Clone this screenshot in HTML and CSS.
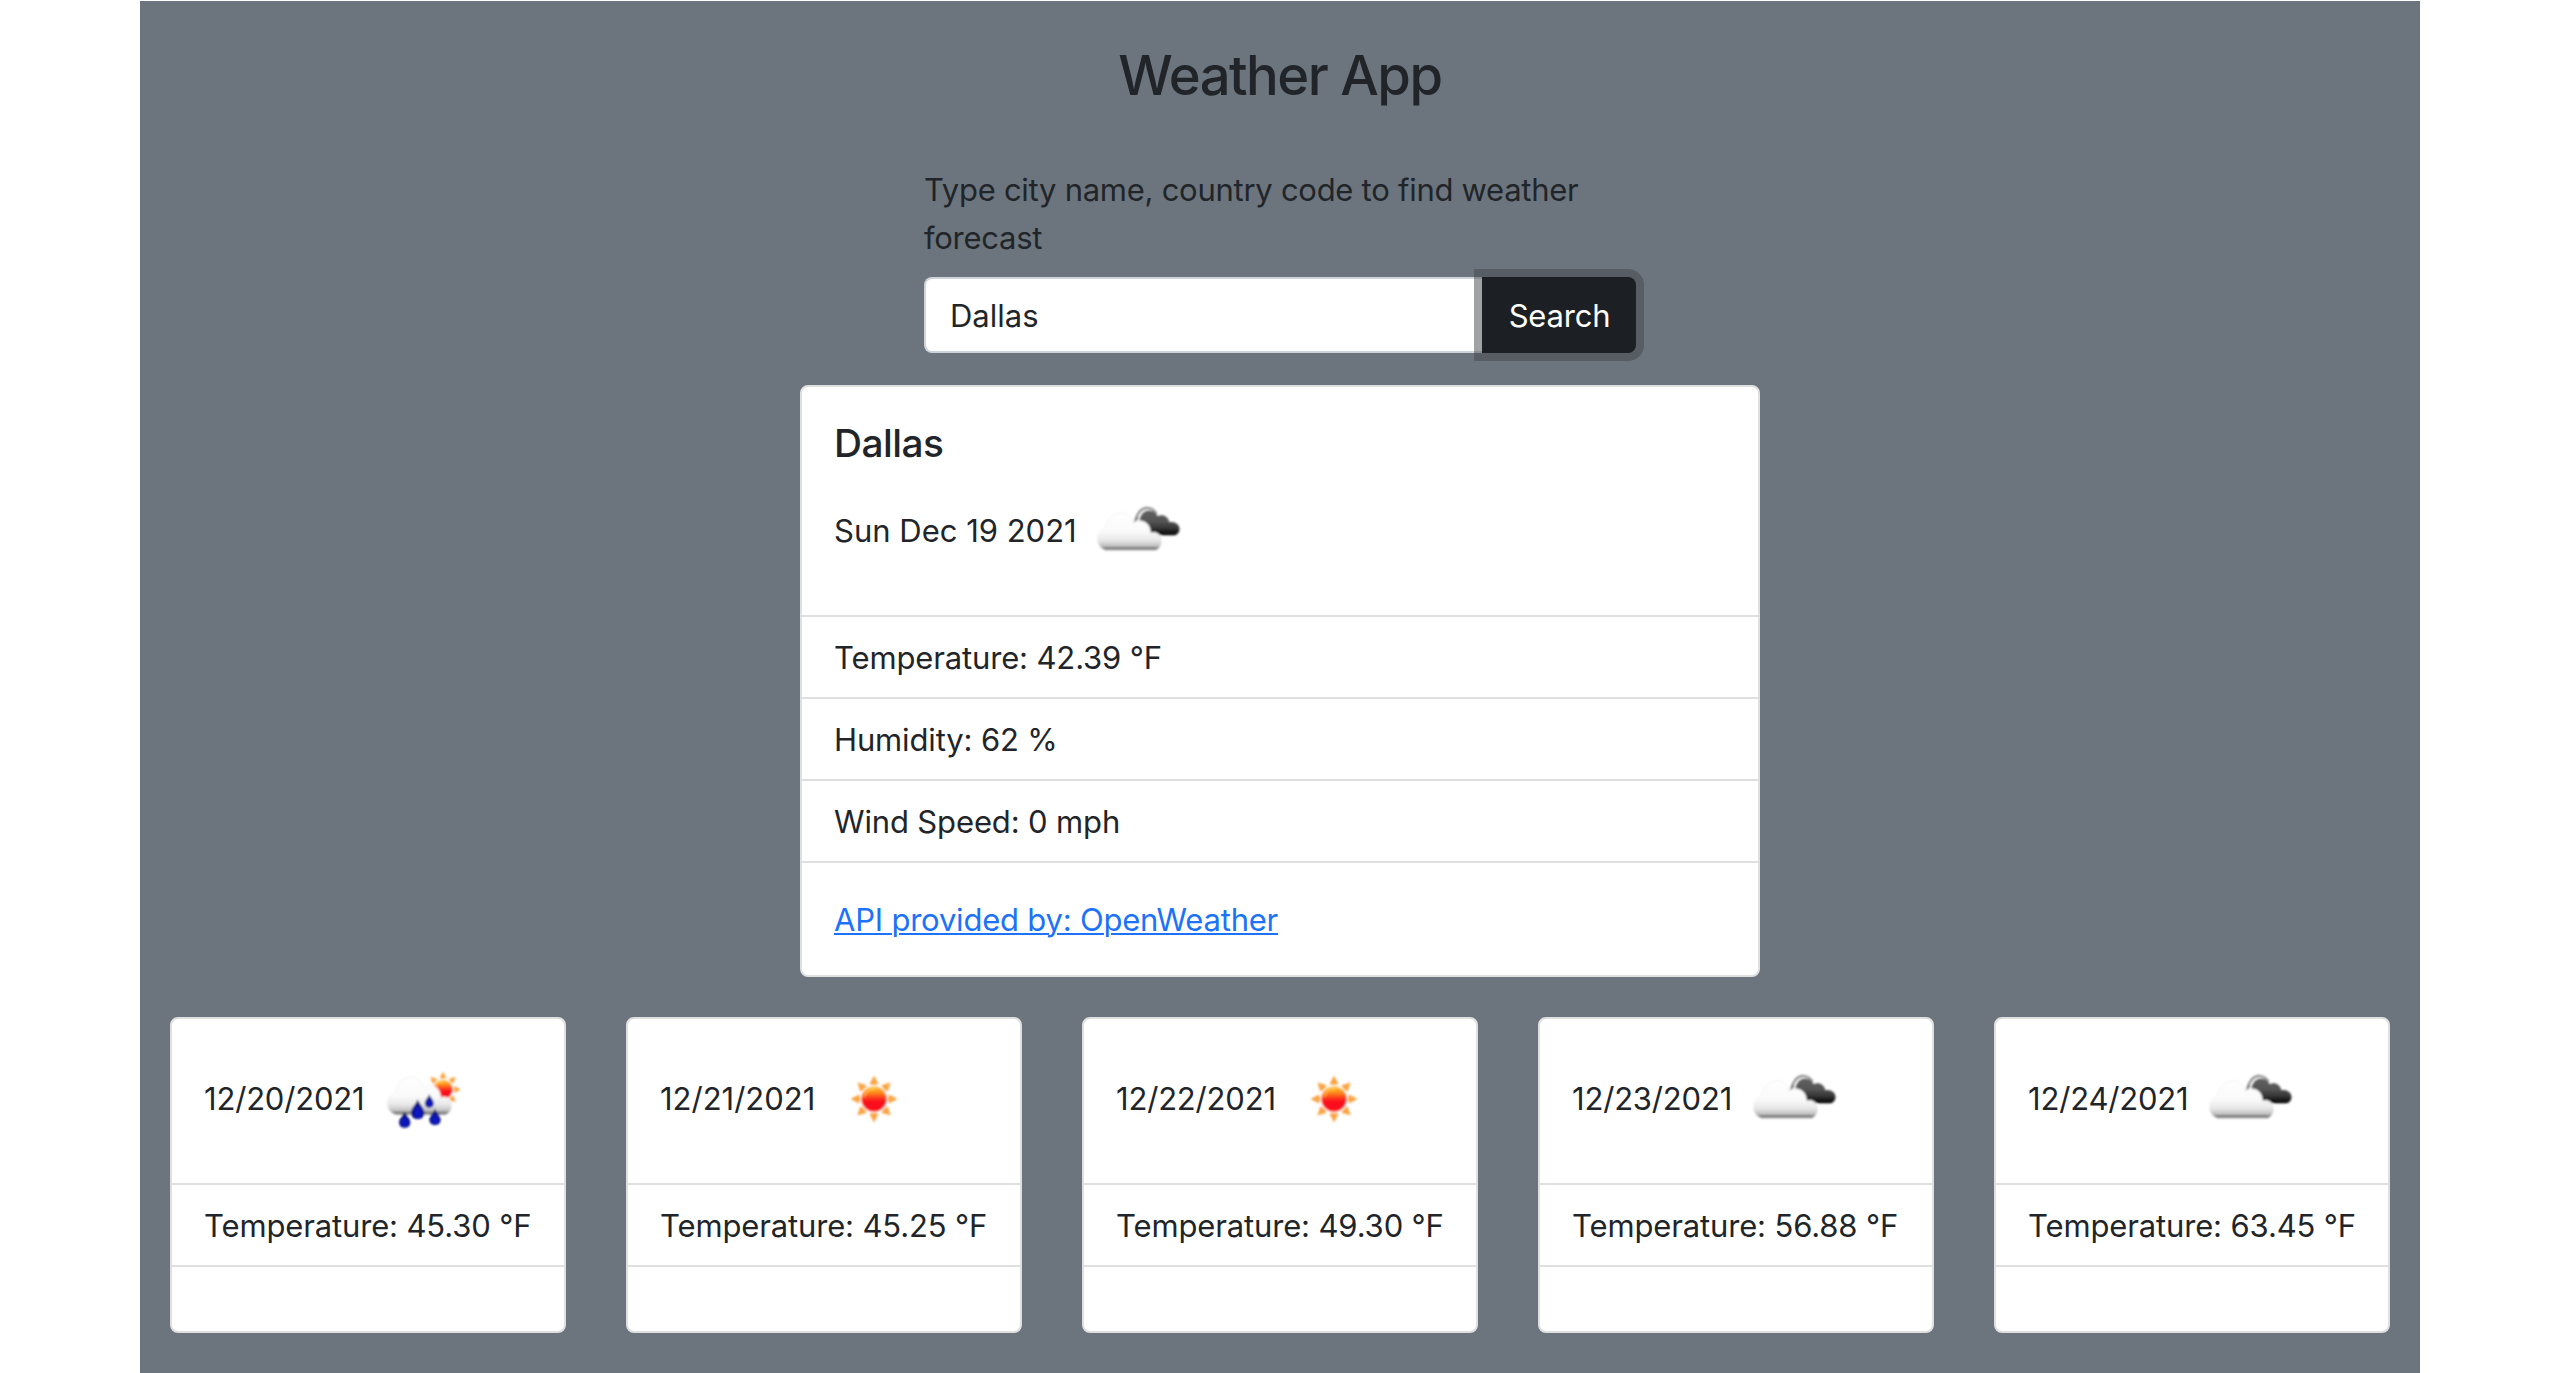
FILE: index.html
```
<!DOCTYPE html>
<html lang="en">
<head>
<meta charset="utf-8">
<title>Weather App</title>
<link rel="stylesheet" href="styles.css">
</head>
<body>
<svg class="defs" width="0" height="0" aria-hidden="true">
  <defs>
    <filter id="soft" x="-10%" y="-10%" width="120%" height="120%"><feGaussianBlur stdDeviation="0.9"/></filter>
    <linearGradient id="cloudFill" gradientUnits="userSpaceOnUse" x1="0" y1="29" x2="0" y2="68">
      <stop offset="0" stop-color="#fff"/><stop offset=".5" stop-color="#fafafa"/><stop offset=".72" stop-color="#e8e8e8"/><stop offset=".87" stop-color="#c4c4c4"/><stop offset=".91" stop-color="#8c8c8c"/><stop offset="1" stop-color="#6c6c6c"/>
    </linearGradient>
    <linearGradient id="darkFill" gradientUnits="userSpaceOnUse" x1="0" y1="25" x2="0" y2="52">
      <stop offset="0" stop-color="#646464"/><stop offset=".5" stop-color="#545454"/><stop offset=".75" stop-color="#343434"/><stop offset="1" stop-color="#000"/>
    </linearGradient>
    <linearGradient id="sunFill" x1="0" y1="0" x2="0" y2="1">
      <stop offset="0" stop-color="#ffc62e"/><stop offset=".25" stop-color="#ff8a1c"/><stop offset=".5" stop-color="#fb2a1a"/><stop offset=".62" stop-color="#fc0d1b"/><stop offset="1" stop-color="#fc0d1b"/>
    </linearGradient>
    <radialGradient id="dropFill" cx=".5" cy=".68" r=".5">
      <stop offset="0" stop-color="#0a1cd8"/><stop offset=".6" stop-color="#0712a8"/><stop offset="1" stop-color="#050a5c"/>
    </radialGradient>
    <path id="cloudShape" d="M20 67.5C14.500 66 11.500 61 11.500 56.500C11.500 51 15 47 20 44.500C21 35.500 27 29.700 34.700 29.700C41 29.700 45.500 33.500 47.500 39.500C50 38.200 52.500 37.700 55.500 38.100C61 39 64.500 43.500 64.500 50C67 49 70.500 49.200 73 51.500C77.500 56 76.500 64.500 69.500 67.500Z"/>
    <path id="drop" d="M0-10C1.200-5.500 6.700-1.500 6.700 3.600C6.700 7.600 3.700 10 0 10C-3.700 10-6.700 7.600-6.700 3.600C-6.700-1.500-1.200-5.500 0-10Z" fill="url(#dropFill)"/>
    <g id="sun">
      <g fill="#fba443">
        <path id="ray" d="M0-23.500L4.500-15Q0-13-4.500-15Z"/>
        <use href="#ray" transform="rotate(45)"/><use href="#ray" transform="rotate(90)"/><use href="#ray" transform="rotate(135)"/><use href="#ray" transform="rotate(180)"/><use href="#ray" transform="rotate(225)"/><use href="#ray" transform="rotate(270)"/><use href="#ray" transform="rotate(315)"/>
      </g>
      <circle r="13.600" fill="#fff0da"/>
      <circle r="12.600" fill="url(#sunFill)"/>
      <path d="M-9.500-2C-9-7-5-10.200 1-10" fill="none" stroke="#ffd65c" stroke-width="1.400" opacity=".75"/>
    </g>
    <symbol id="icon-clouds" viewBox="0 0 100 100">
      <g filter="url(#soft)">
        <path d="M49 40C50.500 30 56 24.500 62 25C66 25.400 69 28 70.500 31" fill="none" stroke="#8a8a8a" stroke-width="2.200"/>
        <path d="M53.500 38C54 31.500 58.500 27.300 63 27.500C67.500 27.800 70.200 30 71.500 33.300C76.500 30.600 82.500 33.500 83.300 39.300C88 37.800 93.500 41 93.500 46C93.500 49.700 91 52.300 87.500 52.300H65Z" fill="url(#darkFill)"/>
        <path d="M46.500 40Q50 39.500 51.500 34" fill="none" stroke="#777" stroke-width="1.800"/>
        <use href="#cloudShape" fill="url(#cloudFill)" stroke="#efefef" stroke-width=".8"/>
      </g>
    </symbol>
    <symbol id="icon-sun" viewBox="0 0 100 100"><g filter="url(#soft)"><use href="#sun" transform="translate(50 48)"/></g></symbol>
    <symbol id="icon-rain" viewBox="0 0 100 100">
      <g filter="url(#soft)">
        <use href="#sun" transform="translate(67 38.500) scale(.76)"/>
        <use href="#cloudShape" transform="translate(0 -3.500)" fill="url(#cloudFill)" stroke="#efefef" stroke-width=".8"/>
        <use href="#drop" transform="translate(41.700 58.200)"/>
        <use href="#drop" transform="translate(53.300 50) scale(.67)"/>
        <use href="#drop" transform="translate(28.700 68.500) scale(.83)"/>
        <use href="#drop" transform="translate(59 65.700) scale(.83)"/>
      </g>
    </symbol>
  </defs>
</svg>
<main class="container">
  <h1 class="heading">Weather App</h1>
  <form class="search">
    <label class="search-label" for="city">Type city name, country code to find weather forecast</label>
    <div class="input-group">
      <input class="search-input" id="city" type="text" value="Dallas">
      <button class="search-button" type="button">Search</button>
    </div>
  </form>
  <section class="card current">
    <div class="card-body">
      <h2 class="card-title">Dallas</h2>
      <p class="day"><span class="date">Sun Dec 19 2021</span><svg class="icon"><use href="#icon-clouds"/></svg></p>
    </div>
    <ul class="list">
      <li class="temp">Temperature: 42.39 °F</li>
      <li>Humidity: 62 %</li>
      <li>Wind Speed: 0 mph</li>
    </ul>
    <div class="card-body"><a class="link" href="#">API provided by: OpenWeather</a></div>
  </section>
  <section class="forecast">
    <article class="card">
      <div class="card-body"><p class="day"><span class="date">12/20/2021</span><svg class="icon"><use href="#icon-rain"/></svg></p></div>
      <ul class="list"><li class="temp">Temperature: 45.30 °F</li></ul>
      <div class="card-end"></div>
    </article>
    <article class="card">
      <div class="card-body"><p class="day"><span class="date">12/21/2021</span><svg class="icon"><use href="#icon-sun"/></svg></p></div>
      <ul class="list"><li class="temp">Temperature: 45.25 °F</li></ul>
      <div class="card-end"></div>
    </article>
    <article class="card">
      <div class="card-body"><p class="day"><span class="date">12/22/2021</span><svg class="icon"><use href="#icon-sun"/></svg></p></div>
      <ul class="list"><li class="temp">Temperature: 49.30 °F</li></ul>
      <div class="card-end"></div>
    </article>
    <article class="card">
      <div class="card-body"><p class="day"><span class="date">12/23/2021</span><svg class="icon"><use href="#icon-clouds"/></svg></p></div>
      <ul class="list"><li class="temp">Temperature: 56.88 °F</li></ul>
      <div class="card-end"></div>
    </article>
    <article class="card">
      <div class="card-body"><p class="day"><span class="date">12/24/2021</span><svg class="icon"><use href="#icon-clouds"/></svg></p></div>
      <ul class="list"><li class="temp">Temperature: 63.45 °F</li></ul>
      <div class="card-end"></div>
    </article>
  </section>
</main>
</body>
</html>
```

FILE: styles.css
```
* { box-sizing: border-box; }

body {
  margin: 0;
  padding-top: 1px;
  background: #fff;
  color: #212529;
  font: 400 31px/48px Inter, "Liberation Sans", sans-serif;
}

h1, h2, p, ul { margin: 0; padding: 0; }

.defs { position: absolute; }

.container {
  display: flex;
  flex-direction: column;
  align-items: center;
  width: 2280px;
  height: 1372px;
  margin: 0 auto;
  padding-top: 41px;
  background: #6c757d;
  overflow: hidden;
}

.heading {
  font-size: 54.4px;
  font-weight: 500;
  line-height: 67px;
  letter-spacing: -1.5px;
}

.search {
  display: flex;
  flex-direction: column;
  gap: 15px;
  width: 712px;
  margin-top: 57px;
}

.search-label { letter-spacing: -0.27px; }

.input-group { display: flex; }

.search-input {
  flex: 1;
  min-width: 0;
  height: 76px;
  padding: 0 24px;
  border: 2px solid #ced4da;
  border-right: 0;
  border-radius: 8px 0 0 8px;
  background: #fff;
  color: inherit;
  font: inherit;
}

.search-button {
  position: relative;
  width: 154px;
  height: 76px;
  padding: 1px 0 0 1px;
  border: 0;
  border-radius: 0 8px 8px 0;
  background: #1c1f23;
  box-shadow: 0 0 0 8px rgba(66, 70, 73, 0.5);
  color: #fff;
  font: inherit;
  letter-spacing: -0.2px;
}

.card {
  border: 2px solid #dfdfdf;
  border-radius: 8px;
  background: #fff;
}

.current {
  width: 960px;
  margin-top: 32px;
}

.card-body { padding: 32px; }

.card-title {
  margin-bottom: 16px;
  font-size: 38.8px;
  font-weight: 500;
  line-height: 48px;
  letter-spacing: -0.5px;
}

.day {
  display: flex;
  align-items: center;
  height: 100px;
}

.date { width: 252px; padding-bottom: 5px; white-space: nowrap; }

.icon { width: 100px; height: 100px; }

.list {
  border-bottom: 2px solid #dfdfdf;
  list-style: none;
}

.list li {
  padding: 17px 32px 15px;
  border-top: 2px solid #dfdfdf;
  letter-spacing: -0.14px;
  white-space: nowrap;
}

.link {
  display: block;
  padding-top: 1px;
  margin-bottom: -1px;
  color: #1c72fa;
  letter-spacing: -0.21px;
  text-decoration-thickness: 2px;
  text-underline-offset: 2px;
}

.forecast {
  display: flex;
  gap: 60px;
  margin-top: 40px;
}

.forecast .card { width: 396px; }

.forecast .date { width: 170px; letter-spacing: -0.18px; }

.forecast .card:nth-child(1) .date { width: 172px; }

.forecast .card:nth-child(2) .date { width: 164px; letter-spacing: 0; }

.forecast .card:nth-child(3) .date { width: 168px; }

.card-end { height: 64px; }
```
